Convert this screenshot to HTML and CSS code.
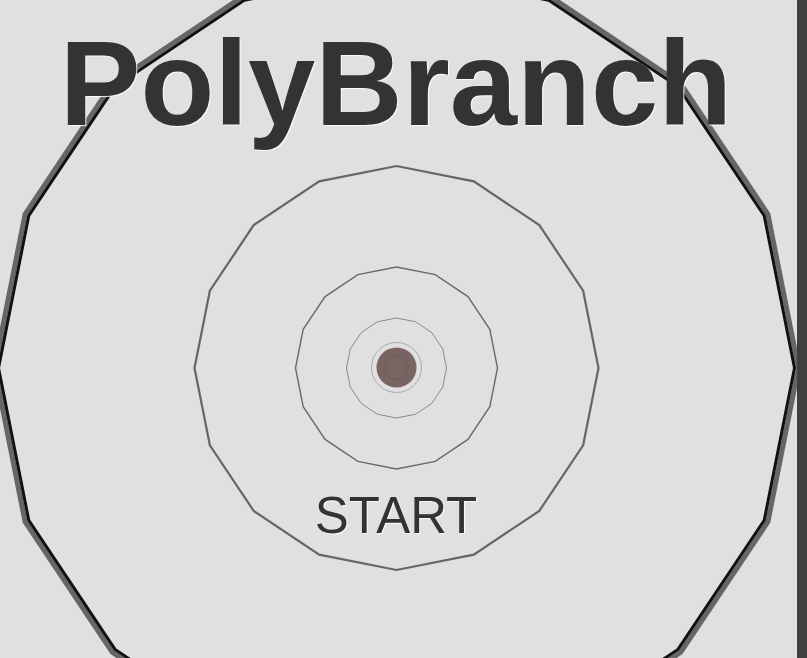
FILE: index.html
```html
<!DOCTYPE html>
<html>
<head>
<meta charset="utf-8">
<title>PolyBranch</title>
<link rel="stylesheet" href="styles.css">
</head>
<body>
<div class="app">
  <main class="stage">
    <svg class="board" width="797" height="658" viewBox="0 0 797 658" xmlns="http://www.w3.org/2000/svg">
      <defs>
        <polygon id="gon" vector-effect="non-scaling-stroke" points="1,0 0.92388,0.38268 0.70711,0.70711 0.38268,0.92388 0,1 -0.38268,0.92388 -0.70711,0.70711 -0.92388,0.38268 -1,0 -0.92388,-0.38268 -0.70711,-0.70711 -0.38268,-0.92388 0,-1 0.38268,-0.92388 0.70711,-0.70711 0.92388,-0.38268"/>
      </defs>
      <g class="rings">
        <use href="#gon" class="ring-outer-shade" transform="translate(396.5 368) scale(402)"/>
        <use href="#gon" class="ring-outer" transform="translate(396.5 368) scale(398)"/>
        <use href="#gon" class="ring-2" transform="translate(396.5 368) scale(202)"/>
        <use href="#gon" class="ring-3" transform="translate(396.5 368) scale(101)"/>
        <use href="#gon" class="ring-4" transform="translate(396.5 368) scale(50)"/>
        <circle class="ring-5" cx="396.5" cy="367.5" r="25"/>
        <circle class="player" cx="396.5" cy="367.5" r="20"/>
        <circle class="player-core" cx="396.5" cy="367.5" r="12"/>
      </g>
    </svg>
    <div class="overlay">
      <h1 class="title">PolyBranch</h1>
      <div class="start">START</div>
    </div>
  </main>
  <aside class="sidebar"></aside>
</div>
</body>
</html>
```
FILE: styles.css
```css
html, body {
  margin: 0;
  padding: 0;
  background: #e0e0e0;
  overflow: hidden;
}

.app {
  display: flex;
  width: 807px;
  height: 658px;
}

.stage {
  position: relative;
  width: 797px;
  height: 658px;
  flex: none;
  background: #e0e0e0;
}

.board {
  display: block;
}

.rings use,
.rings circle {
  fill: none;
}

.ring-outer-shade {
  stroke: #666666;
  stroke-width: 5;
}

.ring-outer {
  stroke: #111111;
  stroke-width: 3;
}

.ring-2 {
  stroke: #666666;
  stroke-width: 2.2;
}

.ring-3 {
  stroke: #6a6a6a;
  stroke-width: 1.4;
}

.ring-4 {
  stroke: #8a8a8a;
  stroke-width: 1;
}

.ring-5 {
  stroke: #aaaaaa;
  stroke-width: 1;
}

.rings .player {
  fill: #7a6363;
}

.rings .player-core {
  fill: none;
  stroke: #6e5858;
  stroke-width: 0.8;
}

.overlay {
  position: absolute;
  inset: 0 5px 0 0;
  display: flex;
  flex-direction: column;
  align-items: center;
  font-family: "Liberation Sans", Arial, sans-serif;
  color: #333333;
}

.title {
  margin: 23px 0 0 0;
  font-size: 121px;
  line-height: 121px;
  font-weight: bold;
  letter-spacing: 0;
  text-shadow: 1px 1px 1px rgba(255, 255, 255, 0.9);
}

.start {
  margin-top: 346px;
  font-size: 51px;
  line-height: 51px;
  font-weight: normal;
  text-shadow: 1px 1px 1px rgba(255, 255, 255, 0.9);
}

.sidebar {
  flex: 1;
  background: #3f3f3f;
}
```
